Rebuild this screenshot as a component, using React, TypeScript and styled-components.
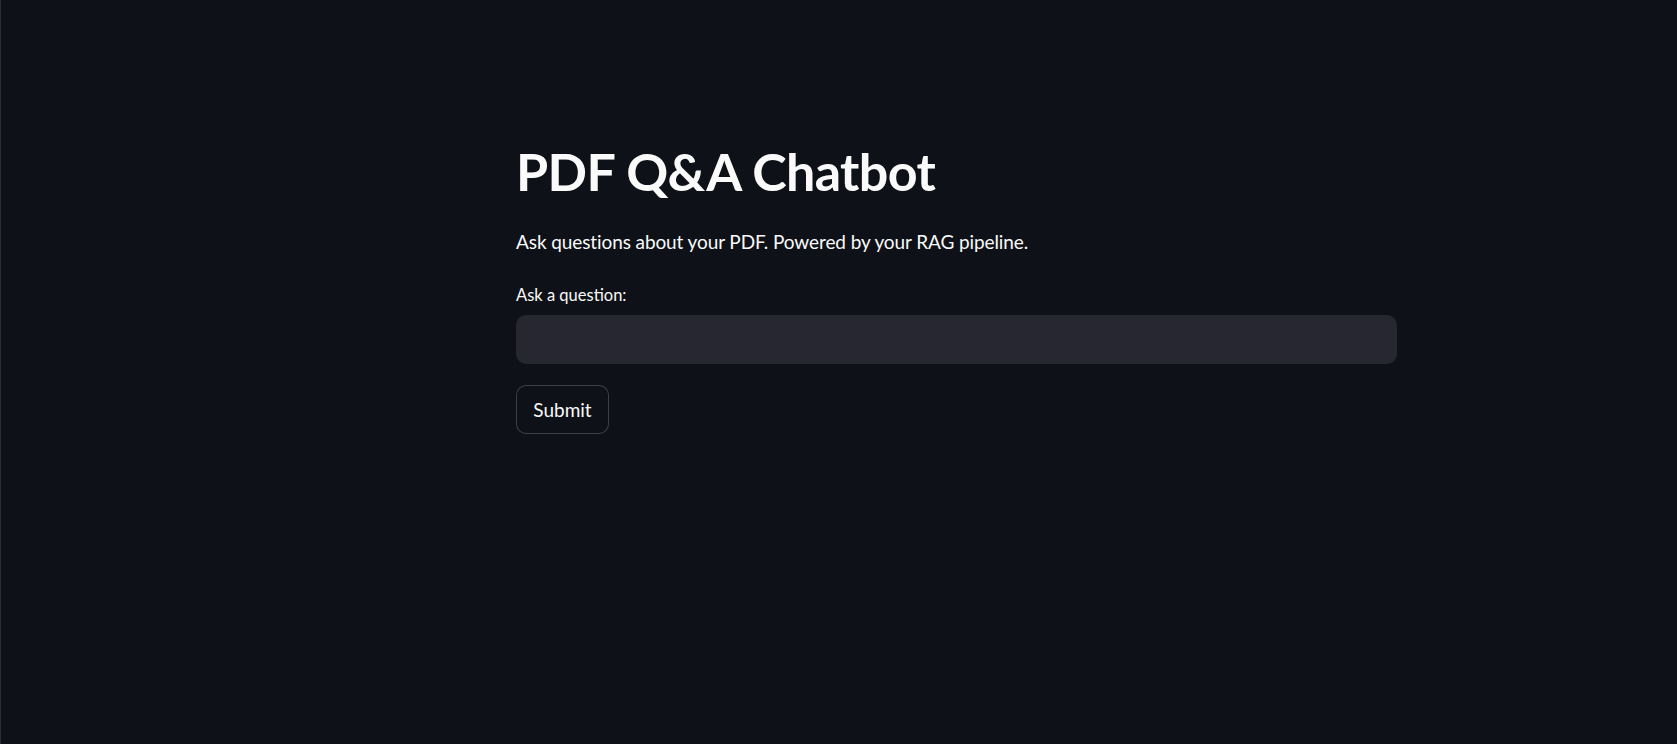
import React from "react";
import styled, { createGlobalStyle } from "styled-components";

const Global = createGlobalStyle`
  html, body { margin: 0; padding: 0; background: #0e1117; }
  body { font-family: "Lato", "Noto Sans", sans-serif; color: #fafafa; }
  * { box-sizing: border-box; }
`;

const Page = styled.div`
  min-height: 744px;
  background: #0e1117;
  border-left: 1px solid #2b2d33;
  padding: 138px 0 0 515px;
`;

const Block = styled.main`
  width: 881px;
  display: flex;
  flex-direction: column;
`;

const Title = styled.h1`
  margin: 0;
  font-size: 52px;
  font-weight: 700;
  line-height: 66px;
  letter-spacing: -0.6px;
  color: #fafafa;
`;

const Lead = styled.p`
  margin: 22px 0 0;
  font-size: 19px;
  line-height: 32px;
  letter-spacing: -0.1px;
  color: #fafafa;
`;

const Label = styled.label`
  margin-top: 26px;
  font-size: 16.5px;
  line-height: 22px;
  color: #fafafa;
`;

const Input = styled.input`
  margin-top: 9px;
  height: 49px;
  width: 100%;
  border: none;
  border-radius: 10px;
  background: #262730;
  color: #fafafa;
  font: inherit;
  font-size: 20px;
  padding: 0 16px;
  outline: none;
`;

const Button = styled.button`
  margin-top: 21px;
  align-self: flex-start;
  height: 49px;
  width: 93px;
  border: 1px solid rgba(250, 250, 250, 0.2);
  border-radius: 10px;
  background: #0e1117;
  color: #fafafa;
  font: inherit;
  font-size: 19px;
  cursor: pointer;
`;

export default function App() {
  return (
    <>
      <Global />
      <Page>
        <Block>
          <Title>PDF Q&amp;A Chatbot</Title>
          <Lead>Ask questions about your PDF. Powered by your RAG pipeline.</Lead>
          <Label htmlFor="q">Ask a question:</Label>
          <Input id="q" type="text" />
          <Button>Submit</Button>
        </Block>
      </Page>
    </>
  );
}
